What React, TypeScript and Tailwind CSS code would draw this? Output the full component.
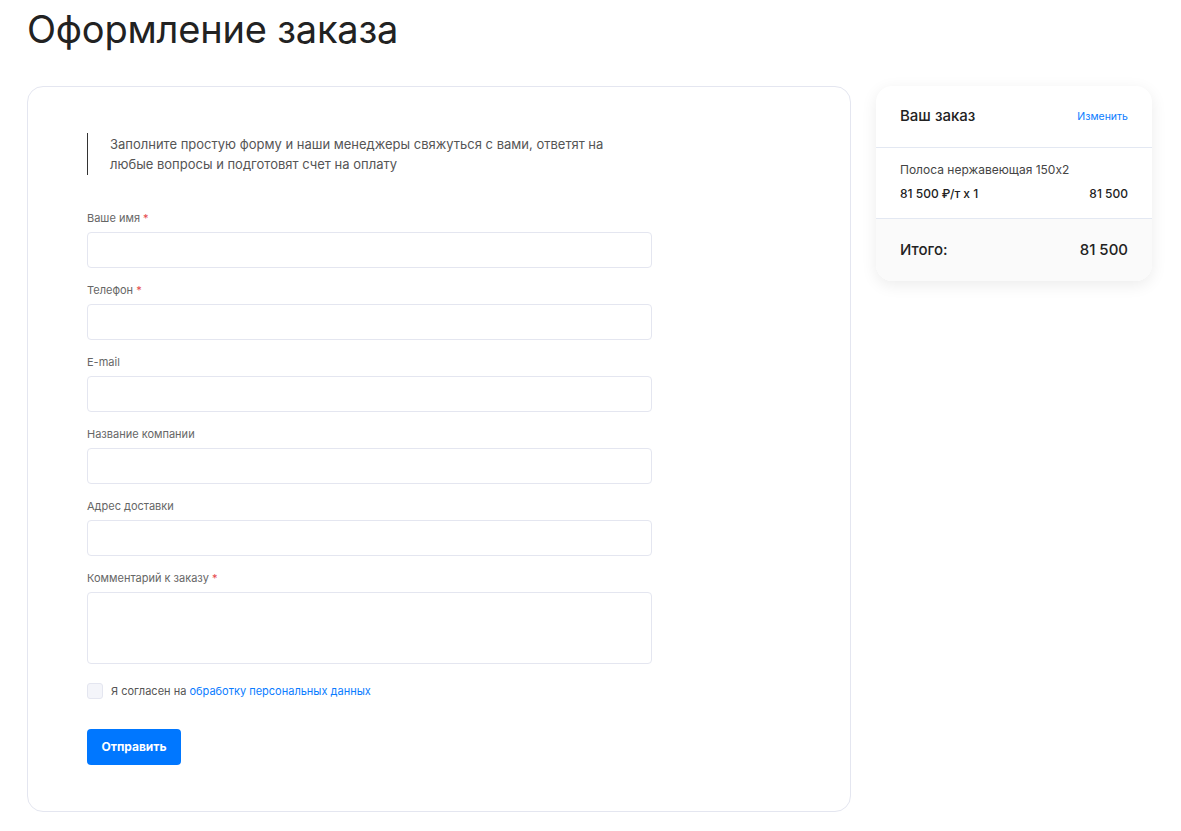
import React from "react";

const fields = [
  { label: "Ваше имя", required: true },
  { label: "Телефон", required: true },
  { label: "E-mail", required: false },
  { label: "Название компании", required: false },
  { label: "Адрес доставки", required: false },
];

function Label({ text, required }: { text: string; required?: boolean }) {
  return (
    <div className="text-[11px] leading-[14px] text-[#666] mb-[7px]">
      {text}
      {required && <span className="text-[#e5484d]"> *</span>}
    </div>
  );
}

export default function App() {
  return (
    <div className="min-h-screen bg-white text-[#222] font-['Inter',sans-serif] pl-[27px] pt-[7px]">
      <h1 className="text-[38px] leading-[44px] font-normal text-[#222] tracking-[-0.2px]">
        Оформление заказа
      </h1>

      <div className="flex items-start gap-[25px] mt-[35px]">
        {/* form */}
        <div className="w-[824px] h-[726px] border border-[#e4e6f0] rounded-[16px] pt-[46px] px-[59px]">
          <div className="border-l border-[#333] pl-[22px] py-[1px] w-[540px] text-[13px] leading-[20px] text-[#555]">
            Заполните простую форму и наши менеджеры свяжуться с вами, ответят на
            любые вопросы и подготовят счет на оплату
          </div>

          <div className="mt-[36px] w-[565px]">
            {fields.map((f) => (
              <div key={f.label} className="mb-[15px]">
                <Label text={f.label} required={f.required} />
                <div className="h-[36px] border border-[#e4e6f0] rounded-[4px]" />
              </div>
            ))}
            <div>
              <Label text="Комментарий к заказу" required />
              <div className="h-[72px] border border-[#e4e6f0] rounded-[4px]" />
            </div>
          </div>

          <div className="flex items-center gap-[8px] mt-[19px]">
            <div className="w-[16px] h-[16px] rounded-[3px] border border-[#e4e6f0] bg-[#f4f5fa]" />
            <span className="text-[11px] text-[#555]">
              Я согласен на <span className="text-[#0a7cff]">обработку персональных данных</span>
            </span>
          </div>

          <button className="mt-[29px] h-[36px] w-[94px] rounded-[4px] bg-[#0077ff] text-white text-[12px] font-bold">
            Отправить
          </button>
        </div>

        {/* order summary */}
        <div className="w-[276px] rounded-[16px] bg-white shadow-[0_4px_16px_rgba(0,0,0,0.08)] overflow-hidden">
          <div className="flex items-center justify-between h-[62px] px-[24px] border-b border-[#e3e8f2]">
            <span className="text-[15px] font-medium text-[#222]">Ваш заказ</span>
            <span className="text-[10.5px] text-[#0a7cff]">Изменить</span>
          </div>
          <div className="px-[24px] pt-[14px] pb-[16px] border-b border-[#e3e8f2]">
            <div className="text-[12px] leading-[16px] text-[#444]">Полоса нержавеющая 150x2</div>
            <div className="flex justify-between mt-[8px] text-[12px] leading-[16px] font-medium text-[#222]">
              <span>81 500 ₽/т x 1</span>
              <span>81 500</span>
            </div>
          </div>
          <div className="flex items-center justify-between h-[62px] px-[24px] bg-[#fafafa] text-[15px] font-medium text-[#222]">
            <span>Итого:</span>
            <span>81 500</span>
          </div>
        </div>
      </div>
    </div>
  );
}
